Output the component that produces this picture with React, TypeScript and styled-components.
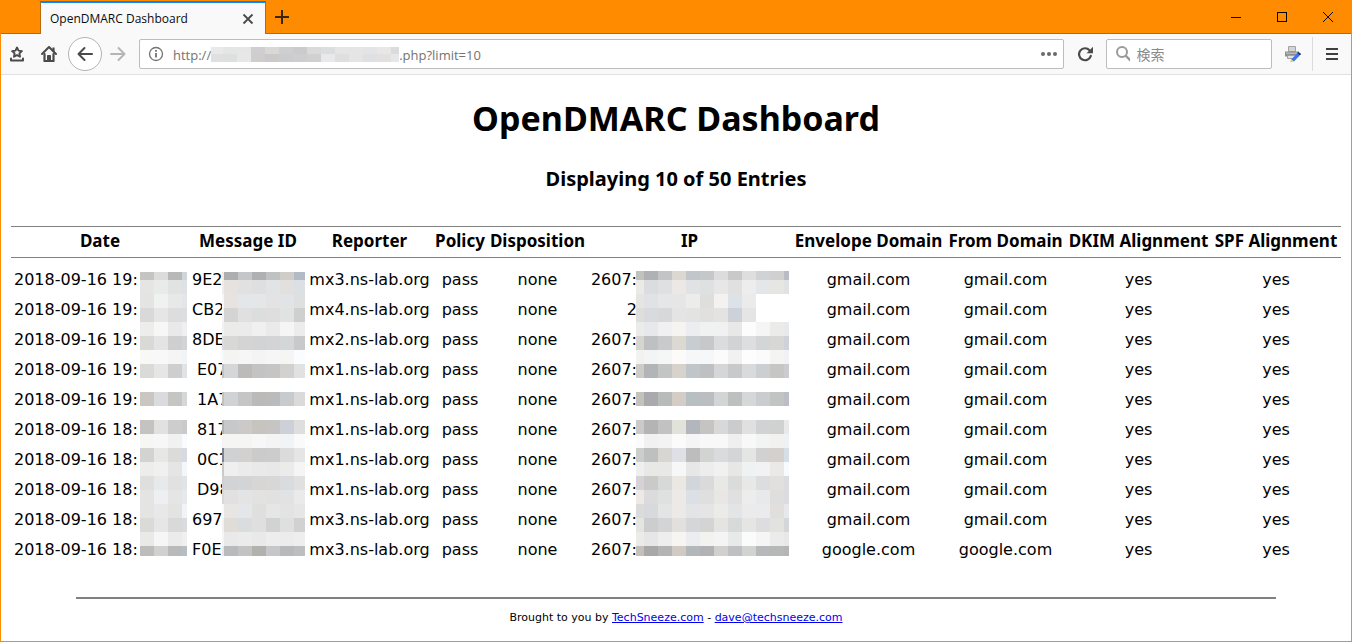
import React from "react";
import styled, { createGlobalStyle } from "styled-components";

const uiFont = `"Open Sans", "Noto Sans CJK JP", sans-serif`;
const pageFont = `"DejaVu Sans", "Noto Sans CJK JP", sans-serif`;
const headFont = `"Noto Sans", "Noto Sans CJK JP", sans-serif`;

const GlobalStyle = createGlobalStyle`
  * { box-sizing: border-box; }
  body { margin: 0; background: #fff; }
  button { border: 0; padding: 0; background: none; color: inherit; font: inherit; }
`;

const Window = styled.div`
  display: flex;
  flex-direction: column;
  min-height: 100vh;
  border: 1px solid #ff8c00;
  border-top: 0;
  background: #fff;
`;

const TitleBar = styled.header`
  display: flex;
  height: 34px;
  padding-left: 39px;
  background: #ff8c00;
  box-shadow: inset 0 -1px #b96a0c;
`;

const Tab = styled.div`
  display: flex;
  align-items: center;
  justify-content: space-between;
  width: 226px;
  margin-top: 1px;
  padding: 0 8px 0 9px;
  border-top: 2px solid #0a84ff;
  border-left: 1px solid #b96a0c;
  border-right: 1px solid #b96a0c;
  background: #f9f9fa;
  color: #0c0c0d;
  font: 12px/16px ${uiFont};
`;

const IconButton = styled.button<{ $w: number }>`
  display: flex;
  align-items: center;
  justify-content: center;
  flex: none;
  width: ${(p) => p.$w}px;
  color: #4a4a4c;
`;

const WindowControls = styled.div`
  display: flex;
  margin-left: auto;
`;

const Toolbar = styled.nav`
  display: flex;
  align-items: center;
  height: 41px;
  padding-bottom: 1px;
  border-bottom: 1px solid #e0e0e1;
  background: #f9f9fa;
`;

const BackButton = styled(IconButton)`
  height: 34px;
  margin-left: 3px;
  border: 1px solid #b4b4b5;
  border-radius: 50%;
  background: #fff;
`;

const Field = styled.div`
  display: flex;
  align-items: center;
  flex: none;
  width: 166px;
  height: 30px;
  padding: 0 6px 0 8px;
  border: 1px solid #bdbdbe;
  border-radius: 2px;
  background: #fff;
  color: #737373;
  font: 13px/18px ${uiFont};
`;

const AddressField = styled(Field)`
  flex: 1;
  width: auto;
  margin-left: 5px;
`;

const Address = styled.div`
  display: flex;
  align-items: center;
  flex: 1;
  padding: 2px 0 0 9px;
`;

const SearchInput = styled.input`
  width: 100%;
  min-width: 0;
  margin-left: 6px;
  padding: 0;
  border: 0;
  outline: 0;
  background: none;
  font: 14px/20px "Noto Sans CJK JP", sans-serif;
  &::placeholder { color: #8a8a8b; opacity: 1; }
`;

const PrintButton = styled(IconButton)`
  margin-left: 5px;
`;

const Divider = styled.span`
  width: 1px;
  height: 34px;
  margin-left: 3px;
  background: #dcdcdd;
`;

const Page = styled.main`
  padding: 0 10px;
  color: #000;
  font: 16px/24px ${pageFont};
  text-align: center;
`;

const Title = styled.h1`
  margin: 19px 0 0;
  font: bold 34px/48px ${headFont};
`;

const Subtitle = styled.h2`
  margin: 22px 0 0;
  font: bold 20px/30px ${headFont};
`;

const Report = styled.table`
  width: 100%;
  margin-top: 32px;
  border-collapse: separate;
  border-spacing: 0;
  table-layout: fixed;
  tbody::before { content: ""; display: block; height: 6px; }
`;

const HeadCell = styled.th`
  height: 32px;
  padding: 0 0 2px;
  border-top: 1px solid #808080;
  border-bottom: 1px solid #808080;
  font: bold 17px/24px ${headFont};
  white-space: nowrap;
`;

const Cell = styled.td<{ $align?: "left" | "right"; $left?: number; $right?: number }>`
  position: relative;
  height: 30px;
  padding: 2px ${(p) => p.$right || 0}px 0 ${(p) => p.$left || 0}px;
  text-align: ${(p) => p.$align || "center"};
  white-space: nowrap;
`;

const Cover = styled.svg<{ $left: number; $top: number }>`
  position: absolute;
  left: ${(p) => p.$left}px;
  top: ${(p) => p.$top}px;
  z-index: 1;
`;

const Rule = styled.hr`
  width: 1200px;
  max-width: 100%;
  height: 2px;
  margin: 33px auto 0;
  border: 0;
  background: #808080;
`;

const Footer = styled.footer`
  margin-top: 11px;
  font: 11px/16px ${pageFont};
  a { color: #0000ee; }
`;

/* Pixelated blocks that hide the private parts of the page. */
const BAND_TOPS = [0, 8, 22, 36, 50, 64, 78, 92, 120, 148, 162, 176, 190, 204, 218, 232, 246, 260, 274];
const BAND_ENDS = [8, 22, 36, 50, 64, 78, 92, 106, 134, 162, 176, 190, 204, 218, 232, 246, 260, 274, 284];

function Mosaic(p: { xs: number[]; bands: string[]; left: number; top: number; lead?: number }) {
  const lead = p.lead || 0;
  return (
    <Cover $left={p.left} $top={p.top} width={p.xs[p.xs.length - 1]} height={284 + lead} shapeRendering="crispEdges" aria-hidden="true">
      {p.bands.map((band, r) =>
        band.split(" ").map((c, i) => {
          const y = r === 0 ? 0 : BAND_TOPS[r] + lead;
          return c === "-" ? null : (
            <rect key={`${r}-${i}`} x={p.xs[i]} y={y} width={p.xs[i + 1] - p.xs[i]} height={BAND_ENDS[r] + lead - y} fill={`#${c}`} />
          );
        })
      )}
    </Cover>
  );
}

const DATE_XS = [0, 14, 28, 42, 47];
const DATE_BANDS = [
  "c4c4c3 dcdcdd b8b9b7 d0d5d9", "e5e5e5 e9eaea e1e3e3 dee1e5", "e4e5e3 f0f2f1 e7e8e8 e4e5e6",
  "d9d9d9 e6e6e6 dddddd dcdee0", "ededec f7f7f7 e9e9e9 efeff1", "d9d9d8 e4e4e4 cfcfcf d1d3d5",
  "f8f8f7 f8f8f8 f5f5f5 f2f3f5", "dadad8 e6e6e7 cecece e0e3e6", "cac7c2 d9dbdf c5c5c3 d5d8da",
  "c4c3c2 e1e1e1 cdcdce c9cacc", "f6f6f4 f7f7f7 f1f1f1 fafbfe", "d3d3d1 e7e7e7 dbdbda d7dbe1",
  "ededeb f0f0ee e5e5e5 f5f6f8", "dfdfdd e8e9ea e1e1e1 e1e4e7", "e4e4e2 eeeff2 e5e5e5 e6e8ea",
  "e4e4e2 e8e8e8 e3e3e1 f1f3f7", "dadad9 e6e6e6 d9d9d9 dadbdc", "e9e9e8 f6f6f6 ebebeb f0f0f1",
  "bdbdbb d1d1d1 b9bab9 b7bdc4",
];

const ID_XS = [0, 2, 16, 30, 44, 58, 72, 83];
const ID_BANDS = [
  "f8eae1 adaeb0 c3c7ca afb0b1 c0c1c2 d0ccc8 b2bbc5", "f5ece6 e5e2e0 e1e1e1 dfdfdf e2e3e4 e2e0df dce0e5",
  "f8f8f8 e6e3e1 e4e7e9 e5e6e7 e3e3e4 e1e3e6 dedfdf", "f5f5f5 d4d4d4 e0e0e0 dcdddd dddedd e1e2e2 cfcfd0",
  "eef2f5 ebebea ebebec f0f0f0 eaeaeb f4f5f4 ececec", "d8dce0 d8d9d7 d4d4d4 d2d3d4 d3d4d4 d4d7d8 c8c9ca",
  "f7f7f7 f4f4f3 f6f6f6 f4f4f4 f6f6f6 f5f5f4 fbfcff", "c2c3c5 d5d6d8 bdbbb9 c3c3c3 c5c5c5 d2d1cf e1e1e2",
  "c0c0bf d0d2d4 c5c5c6 bcbab9 bcbbbb c8cbce dadada", "b2b2b2 c6c8ca cccac8 c7c3bf c6c5c3 cdd0d6 dedede",
  "f4f4f4 f5f5f4 f5f5f4 f7f7f7 f4f4f4 f2f3f5 fafafa", "7d8496 d0d1d3 d2d1cf cbcbcc cccccc dbdbdc e5e5e5",
  "c9c9c9 efeff0 ebebec e9e9e9 e8e8e8 ebebe9 f5f5f5", "cfcfcf d1d3d5 d3d4d5 d7d6d4 d7d7d7 d9dcdf e0e0e0",
  "d8d8d8 e1e1e2 e4e4e5 e2e2e2 e1e1e1 e1e2e3 eaeaea", "f9f9f9 e8e6e3 e4e7ea dfdfde e6e6e6 e3e3e3 e6e6e7",
  "f2f2f2 e0dcd7 d9dddd dfdfdf d1d2d2 dfdfdf d1d1d2", "f5f5f5 e8e9e8 ebebeb e9e9e9 ededed ececec eeeeee",
  "e8e8e8 b9babc c3c3c4 b1b1ae c6c7c8 b8b9bb bdbec0",
];

const IP_XS = [0, 8, 22, 36, 50, 64, 78, 92, 106, 120, 134, 148, 153];
const IP_BANDS = [
  "c1c1be b0b1b3 c3c4c5 ddd7d2 c1c6ca c6c7c8 dcdcdd c8c9ca dededf d0d2d4 d0d0d0 b9bcc4",
  "ebeae6 dadce0 dfe0e1 ebe8e5 e0e2e5 dfe0e0 e7e7e7 e0e0e0 ededed e4e7ea e6e6e3 e0e2e4",
  "e5e5e4 e0e2e5 e6e6e6 e6e6e7 ececea dededc f3f2f0 dde2e6 ebebec - - -",
  "dfdedb d9dadd d7d8d9 e4e4e4 e3e3e3 e1e0df e3e3e1 cdd1d9 e5e5e5 - - -",
  "ebebea e6e8ec f0f0f0 f5f4f1 ebedf0 f0f1f1 f1f1f1 e8e8e9 fbfcfb f5f5f5 ebebea e8e9eb",
  "d6d5d0 bfc0c1 c9cacb dcd8d2 c8cdd1 c7c8c9 dbdcdd d2d3d4 dedede d2d6d7 d7d7d5 d0d2d9",
  "f2f2f1 f3f5f5 f5f6f6 fcfbfa f6f7f8 f6f7f8 fbfbfa f1f1f1 fcfdfc fbfbfb f4f4f2 f0f2f3",
  "cdccc6 b3b4b8 c3c5c4 d8d2cd c0c5ca bfc0c1 d6d6d8 c7cac9 d9dadb cccfd2 c6c6c4 ccccd0",
  "c4c2bd a9aaad b9bbbb d3ccc7 b8bfc2 bcbdbe d3d4d6 bebfbf d5d7d8 cbcccd c2c3c3 bbbec6",
  "cacaca b4b4b5 c2c2c3 e1e2da b4b6be c5c4c2 d8d8d9 cbcccd e0e0e1 d0d2d4 d0d1d1 e8e9eb",
  "fafcfb f1f1f1 f3f3f3 fbfbfb f5f5f5 f8f8f8 f8f8f8 efeff0 f8f8f8 f2f4f4 f1f1f0 eff1f3",
  "cdcdcc bec0bf d7d6d2 dee0e5 bdbdbe d3d3d1 dadbdd d4d5d8 e5e5e4 d1d1d2 d4d0cd d4dfe7",
  "eeeff1 e8e8e6 e8e8e7 f6f8f8 e7e7e8 ededee f1f1f2 e7e7e5 eff2f2 f2f2f3 ebe9e7 f6fbff",
  "d5d3d5 cacacb d8d8d9 ebe7e3 d2d6da dadadb e8e8e7 dadcdb e8e8e7 dcdddf e1e0de dcdcdf",
  "eee9e5 dbdbde dfe0e0 ece9e7 dbe0e6 dfdfe0 e8e7e6 e0e0e1 ededed e8e9eb dededf dcdce0",
  "dbdbdb d8d9dc e3e5e4 ece9e6 e3e4e6 e5e5e6 ebebea e3e4e5 ebebec eaebeb e0dfdd e7e8eb",
  "e4e4e0 cccdcf d3d4d6 e2e0de d5d6d8 d4d4d4 e5e4e3 d8dad9 e5e5e4 dddddf e2e2df d5d6d7",
  "ebebea e6e6e7 eeeeee f7f5f2 ecedf0 f2f2ef f4f4f4 e8eae9 fafcfb f5f5f5 ebebeb e8e8e9",
  "c4c1bc a8a8a9 b4b4b5 d0cac2 b2b8ba b2b2b4 d1d0ce bfc0c2 d2d2d1 b7b8b9 b6b7b7 b3b5b6",
];

function UrlMosaic() {
  const xs = [0, 12, 26, 40, 54, 68, 82, 96, 110, 124, 138, 152, 166, 180, 188];
  const top = "e9e9ea e4e5e5 e6e6e7 cfcfd1 dad8d7 d0cfd0 cbcbcd d9dbdb dcdddf e5e5e5 e5e5e5 e4e4e4 e8e7e7 dadbdd".split(" ");
  const bottom = "dfe0df dfdfe0 e7e7e7 cfcecd cacacb cbcccd cecece d0d0d1 e9e9eb dfdfdf e5e5e5 dfe0e3 e2e1e0 e6e7e8".split(" ");
  return (
    <svg width="188" height="15" shapeRendering="crispEdges" aria-hidden="true">
      {top.map((c, i) => <rect key={i} x={xs[i]} y="0" width={xs[i + 1] - xs[i]} height="7" fill={`#${c}`} />)}
      {bottom.map((c, i) => <rect key={i} x={xs[i]} y="7" width={xs[i + 1] - xs[i]} height="8" fill={`#${c}`} />)}
    </svg>
  );
}

const COLUMNS: [string, number][] = [
  ["Date", 178], ["Message ID", 118], ["Reporter", 125], ["Policy", 56], ["Disposition", 99],
  ["IP", 205], ["Envelope Domain", 153], ["From Domain", 121], ["DKIM Alignment", 145], ["SPF Alignment", 130],
];

const ROWS = [
  { hour: 19, id: "9E2", mx: "mx3", ip: "2607:", domain: "gmail.com" },
  { hour: 19, id: "CB2", mx: "mx4", ip: "2", domain: "gmail.com" },
  { hour: 19, id: "8DE", mx: "mx2", ip: "2607:", domain: "gmail.com" },
  { hour: 19, id: "E07", mx: "mx1", ip: "2607:", domain: "gmail.com", narrow: true },
  { hour: 19, id: "1A7", mx: "mx1", ip: "2607:", domain: "gmail.com", narrow: true },
  { hour: 18, id: "817", mx: "mx1", ip: "2607:", domain: "gmail.com", narrow: true },
  { hour: 18, id: "0C1", mx: "mx1", ip: "2607:", domain: "gmail.com", narrow: true },
  { hour: 18, id: "D98", mx: "mx1", ip: "2607:", domain: "gmail.com", narrow: true },
  { hour: 18, id: "697", mx: "mx3", ip: "2607:", domain: "gmail.com" },
  { hour: 18, id: "F0E", mx: "mx3", ip: "2607:", domain: "google.com" },
];

export default function App() {
  return (
    <>
      <GlobalStyle />
      <Window>
        <TitleBar>
          <Tab>
            OpenDMARC Dashboard
            <IconButton $w={18} aria-label="Close tab">
              <svg width="12" height="12" fill="none" stroke="currentColor" strokeWidth="1.8"><path d="M1.500 1.500l9 9M10.500 1.500l-9 9" /></svg>
            </IconButton>
          </Tab>
          <IconButton $w={32} aria-label="New tab">
            <svg width="14" height="14" fill="none" stroke="#3b2508" strokeWidth="2"><path d="M7 0v14M0 7h14" /></svg>
          </IconButton>
          <WindowControls>
            <IconButton $w={46} aria-label="Minimize">
              <svg width="10" height="10" stroke="#000" shapeRendering="crispEdges"><path d="M0 5.500h10" /></svg>
            </IconButton>
            <IconButton $w={46} aria-label="Maximize">
              <svg width="10" height="10" fill="none" stroke="#000" shapeRendering="crispEdges"><path d="M.5.5h9v9h-9z" /></svg>
            </IconButton>
            <IconButton $w={46} aria-label="Close">
              <svg width="10" height="10" fill="none" stroke="#000"><path d="M0 0l10 10M10 0L0 10" /></svg>
            </IconButton>
          </WindowControls>
        </TitleBar>

        <Toolbar>
          <IconButton $w={32} aria-label="Bookmarks">
            <svg width="16" height="18" viewBox="0 0 16 18" fill="none" stroke="currentColor">
              <path d="M8 2.500l1.500 3.100 3.400.5-2.500 2.300.6 3.300L8 10.100l-3 1.600.6-3.300L3.100 6.100l3.400-.5z" strokeWidth="1.900" strokeLinejoin="round" />
              <path d="M2 13.500v2h12v-2" strokeWidth="2" strokeLinejoin="round" strokeLinecap="round" />
            </svg>
          </IconButton>
          <IconButton $w={32} aria-label="Home">
            <svg width="16" height="16" viewBox="0 0 16 16" fill="none" stroke="currentColor" strokeLinejoin="round" strokeLinecap="round">
              <path d="M1 8l7-7 7 7" strokeWidth="2" />
              <path d="M3.500 8v7h9V8" strokeWidth="2.200" />
              <path d="M6.500 14.500v-5h3v5z" fill="currentColor" strokeWidth="1" />
              <path d="M12.500 1.500v4" strokeWidth="2.200" strokeLinecap="butt" />
            </svg>
          </IconButton>
          <BackButton $w={34} aria-label="Back">
            <svg width="16" height="16" fill="none" stroke="currentColor" strokeWidth="2" strokeLinejoin="round" strokeLinecap="round"><path d="M15 8H1.500M7.500 2l-6 6 6 6" /></svg>
          </BackButton>
          <IconButton $w={32} aria-label="Forward" disabled>
            <svg width="16" height="16" fill="none" stroke="#b5b5b6" strokeWidth="2" strokeLinejoin="round" strokeLinecap="round"><path d="M1 8h13.500M8.500 2l6 6-6 6" /></svg>
          </IconButton>
          <AddressField>
            <svg width="16" height="16" fill="none" stroke="#737373" aria-hidden="true">
              <circle cx="8" cy="8" r="6.500" strokeWidth="1.300" />
              <path d="M8 7v4.500M8 4v1.700" strokeWidth="1.800" />
            </svg>
            <Address><span>http://</span><UrlMosaic /><span>.php?limit=10</span></Address>
            <IconButton $w={16} aria-label="Page actions">
              <svg width="16" height="6" fill="#6a6a6b"><circle cx="2" cy="3" r="2" /><circle cx="8" cy="3" r="2" /><circle cx="14" cy="3" r="2" /></svg>
            </IconButton>
          </AddressField>
          <IconButton $w={42} aria-label="Reload">
            <svg width="16" height="16" viewBox="0 0 16 16" fill="none" stroke="currentColor" strokeWidth="2.200">
              <path d="M13.800 10A6 6 0 1 1 12.500 4.200" strokeLinecap="round" />
              <path d="M16 .8v6.400H9.600z" fill="currentColor" stroke="none" />
            </svg>
          </IconButton>
          <Field>
            <svg width="18" height="18" fill="none" stroke="#9a9a9b" aria-hidden="true">
              <circle cx="7" cy="7" r="5" strokeWidth="2" /><path d="M11 11l5 5" strokeWidth="2.400" strokeLinecap="round" />
            </svg>
            <SearchInput aria-label="検索" placeholder="検索" />
          </Field>
          <PrintButton $w={32} aria-label="Print">
            <svg width="16" height="16" viewBox="0 0 16 16">
              <path d="M3.500.5h7v5h-7z" fill="#d4d4d4" stroke="#a2a2a2" />
              <path d="M0 5.500h14v5H0z" fill="#8e8e90" />
              <path d="M1 6.500h11v1.500H1z" fill="#b9b9bb" />
              <path d="M2.500 9.500h8v3h-8z" fill="#e2e2e2" stroke="#a2a2a2" />
              <path d="M13.500 6l2.500 2-7 7.500-2.800-2z" fill="#3b74f2" />
              <path d="M13.500 6l2.500 2-1.200 1.300-2.500-2.100z" fill="#26364f" />
              <path d="M6.200 13.500L9 15.500 5 16z" fill="#f3c13a" />
            </svg>
          </PrintButton>
          <Divider />
          <IconButton $w={38} aria-label="Menu">
            <svg width="12" height="12" fill="#3f3f41" shapeRendering="crispEdges"><path d="M0 0h12v2H0zM0 5h12v2H0zM0 10h12v2H0z" /></svg>
          </IconButton>
        </Toolbar>

        <Page>
          <Title>OpenDMARC Dashboard</Title>
          <Subtitle>Displaying 10 of 50 Entries</Subtitle>
          <Report>
            <colgroup>{COLUMNS.map(([name, w]) => <col key={name} width={w} />)}</colgroup>
            <thead><tr>{COLUMNS.map(([name]) => <HeadCell key={name} scope="col">{name}</HeadCell>)}</tr></thead>
            <tbody>
              {ROWS.map((row, i) => (
                <tr key={row.id}>
                  <Cell $align="left" $left={3}>
                    2018-09-16 {row.hour}:
                    {i === 0 && <Mosaic xs={DATE_XS} bands={DATE_BANDS} left={129} top={8} />}
                  </Cell>
                  <Cell $align="left" $left={row.narrow ? 8 : 3}>
                    {row.id}
                    {i === 0 && <Mosaic xs={ID_XS} bands={ID_BANDS} left={33} top={8} />}
                  </Cell>
                  <Cell>{row.mx}.ns-lab.org</Cell>
                  <Cell>pass</Cell>
                  <Cell>none</Cell>
                  <Cell $align="right" $right={155}>
                    {row.ip}
                    {i === 0 && <Mosaic xs={IP_XS} bands={IP_BANDS} left={49} top={7} lead={1} />}
                  </Cell>
                  <Cell>{row.domain}</Cell>
                  <Cell>{row.domain}</Cell>
                  <Cell>yes</Cell>
                  <Cell>yes</Cell>
                </tr>
              ))}
            </tbody>
          </Report>
          <Rule />
          <Footer>
            Brought to you by <a href="#techsneeze">TechSneeze.com</a> - <a href="#mail">dave@techsneeze.com</a>
          </Footer>
        </Page>
      </Window>
    </>
  );
}
